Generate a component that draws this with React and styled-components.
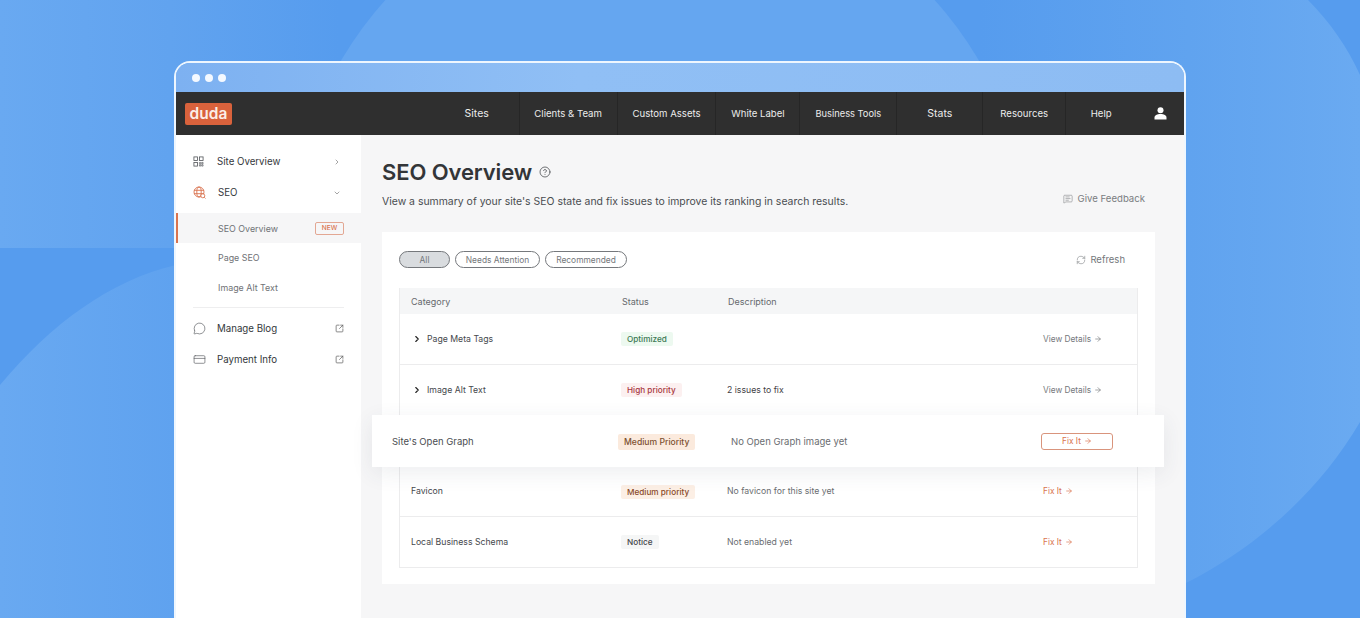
import React from 'react'
import styled, { createGlobalStyle } from 'styled-components'
import { ChevronRight, ChevronDown, MessageCircle, CreditCard, SquareArrowOutUpRight, CircleHelp, MessageSquareText, RefreshCw, ArrowRight } from 'lucide-react'

const Global = createGlobalStyle`
  html, body { margin: 0; padding: 0; height: 100%; overflow: hidden; }
  body { font-family: Inter, "Liberation Sans", sans-serif; background: #569cee; }
  #root { height: 100%; }
`

const Page = styled.div`
  position: relative;
  width: 1360px;
  height: 618px;
  overflow: hidden;
  padding-top: 61px;
  box-sizing: border-box;
`
const Backdrop = styled.svg`
  position: absolute;
  inset: 0;
`
const Window = styled.div`
  position: relative;
  width: 1012px;
  height: 600px;
  margin-left: 174px;
  border: 2px solid #eef6fe;
  border-bottom: none;
  border-radius: 16px 16px 0 0;
  box-sizing: border-box;
  overflow: hidden;
  display: flex;
  flex-direction: column;
`
const TitleBar = styled.div`
  height: 29px;
  flex: none;
  display: flex;
  align-items: center;
  gap: 5px;
  padding-left: 16px;
  background: linear-gradient(90deg, #7db1f1 0%, #90bff5 40%, #8dbcf3 100%);
`
const Dot = styled.span`
  width: 8px;
  height: 8px;
  border-radius: 50%;
  background: #f4f9ff;
`
const Navbar = styled.div`
  height: 43px;
  flex: none;
  display: flex;
  align-items: stretch;
  background: #2f2f2f;
`
const Logo = styled.div`
  width: 47px;
  height: 22px;
  margin: 11px 0 0 9px;
  background: #d9623c;
  border-radius: 2px;
  color: #fbeee8;
  font-size: 15.5px;
  font-weight: 600;
  line-height: 21px;
  text-align: center;
`
const NavSpacer = styled.div`
  width: 203px;
`
const NavItem = styled.div`
  width: ${p => p.$w}px;
  display: flex;
  align-items: center;
  justify-content: center;
  color: #ececec;
  font-size: ${p => p.$size || 9.6}px;
  padding-bottom: 1px;
  border-left: ${p => p.$line ? '1px solid #262626' : 'none'};
  box-sizing: border-box;
`
const Body = styled.div`
  flex: 1;
  display: flex;
  min-height: 0;
`
const Sidebar = styled.aside`
  width: 185px;
  flex: none;
  background: #fff;
  padding-top: 11px;
  box-sizing: border-box;
`
const SideItem = styled.div`
  height: 31px;
  display: flex;
  align-items: center;
  padding: 0 17px;
  color: #35383c;
  font-size: 9.7px;
`
const SideIcon = styled.span`
  width: 24px;
  display: flex;
  align-items: center;
  color: ${p => p.$accent ? '#d9734f' : '#55585c'};
`
const SideLabel = styled.span`
  flex: 1;
  margin-left: ${p => p.$nudge ? 1 : 0}px;
`
const SideChevron = styled.span`
  display: flex;
  margin-right: 3px;
  color: #777;
`
const SubList = styled.div`
  margin-top: 5px;
`
const SubItem = styled.div`
  height: ${p => p.$active ? 30 : 29.5}px;
  display: flex;
  align-items: center;
  justify-content: space-between;
  padding: 0 17px 0 ${p => p.$active ? 40 : 42}px;
  box-sizing: border-box;
  color: #6f7276;
  font-size: 8.9px;
  background: ${p => p.$active ? '#f6f6f7' : 'transparent'};
  border-left: ${p => p.$active ? '2px solid #d9734f' : 'none'};
`
const NewTag = styled.span`
  width: 29px;
  height: 13px;
  border: 1px solid #e3a793;
  border-radius: 2px;
  box-sizing: border-box;
  color: #d9734f;
  font-size: 6.5px;
  font-weight: 500;
  line-height: 11px;
  text-align: center;
`
const SideRule = styled.div`
  height: 1px;
  margin: 5px 17px;
  background: #eeeeef;
`
const Main = styled.main`
  flex: 1;
  background: #f6f6f7;
  padding: 22px 29px 0 21px;
  min-width: 0;
`
const TitleRow = styled.div`
  display: flex;
  align-items: center;
  gap: 7px;
  height: 29px;
`
const Title = styled.h1`
  margin: 0;
  color: #333538;
  font-size: 22px;
  font-weight: 600;
  letter-spacing: -0.1px;
`
const SubRow = styled.div`
  display: flex;
  justify-content: space-between;
  align-items: flex-start;
  margin-top: 7px;
  height: 39px;
`
const Lead = styled.p`
  margin: 2px 0 0;
  color: #4a4d51;
  font-size: 10.45px;
  line-height: 14px;
`
const Feedback = styled.div`
  display: flex;
  align-items: center;
  gap: 5px;
  color: #7a7d81;
  font-size: 9.6px;
  margin-right: 10px;
`
const Card = styled.section`
  width: 773px;
  height: 352px;
  background: #fff;
  padding: 19px 17px 0;
  box-sizing: border-box;
`
const Toolbar = styled.div`
  display: flex;
  align-items: center;
  justify-content: space-between;
  height: 17px;
  margin-bottom: 20px;
`
const Pills = styled.div`
  display: flex;
  gap: 5px;
`
const Pill = styled.span`
  height: 17px;
  width: ${p => p.$w}px;
  border: 1px solid #75787c;
  border-radius: 9px;
  box-sizing: border-box;
  background: ${p => p.$on ? '#d9dcdf' : '#fff'};
  color: #74777b;
  font-size: 8.4px;
  line-height: 16px;
  text-align: center;
`
const Refresh = styled.div`
  display: flex;
  align-items: center;
  gap: 4px;
  color: #74777b;
  font-size: 9.5px;
  margin-right: 13px;
`
const Table = styled.div`
  width: 739px;
  height: 280px;
  border: 1px solid #ececed;
  border-top: none;
  box-sizing: border-box;
`
const HeadRow = styled.div`
  height: 26px;
  display: grid;
  grid-template-columns: 211px 106px 1fr;
  align-items: center;
  padding-left: 11px;
  background: #f5f6f7;
  color: #66696d;
  font-size: 9px;
`
const Row = styled.div`
  height: ${p => p.$h || 50.5}px;
  display: grid;
  grid-template-columns: 221px 106px 1fr 94px;
  align-items: center;
  border-bottom: ${p => p.$plain ? 'none' : '1px solid #ececed'};
  box-sizing: border-box;
  color: #45484c;
  font-size: 8.7px;
`
const FloatRow = styled.div`
  position: relative;
  width: 792px;
  height: 52px;
  margin-left: -28px;
  display: grid;
  grid-template-columns: 226px 113px 310px 1fr;
  align-items: center;
  padding-left: 20px;
  box-sizing: border-box;
  background: #fff;
  box-shadow: 0 6px 22px rgba(60, 70, 90, 0.09);
  color: #4a4d51;
  font-size: 9.5px;
`
const Category = styled.div`
  display: flex;
  align-items: center;
  padding-left: ${p => p.$arrow ? 12 : 11}px;
  gap: 5px;
`
const Badge = styled.span`
  justify-self: start;
  padding: 2px 6px;
  margin-top: 1px;
  border-radius: 2px;
  font-size: ${p => p.$big ? 8.6 : 8.2}px;
  font-weight: 500;
  line-height: ${p => p.$big ? 12 : 10}px;
  color: ${p => p.$fg};
  background: ${p => p.$bg};
`
const Desc = styled.span`
  color: ${p => p.$dark ? '#3f4246' : '#6a6d71'};
`
const Action = styled.span`
  display: flex;
  align-items: center;
  gap: 3px;
  color: ${p => p.$fix ? '#d9734f' : '#75787c'};
  font-size: 8.3px;
`
const FixButton = styled.span`
  width: 72px;
  height: 17px;
  border: 1px solid #d9947c;
  border-radius: 3px;
  box-sizing: border-box;
  display: flex;
  align-items: center;
  justify-content: center;
  gap: 3px;
  color: #d9734f;
  font-size: 8.3px;
`

const navItems = [
  { label: 'Sites', w: 84, size: 10.5 },
  { label: 'Clients & Team', w: 98, line: true },
  { label: 'Custom Assets', w: 99, line: true },
  { label: 'White Label', w: 84, line: true },
  { label: 'Business Tools', w: 97, line: true, size: 9.3 },
  { label: 'Stats', w: 86, line: true, size: 10.5 },
  { label: 'Resources', w: 83, line: true },
  { label: 'Help', w: 71, line: true }
]

const OverviewIcon = () => (
  <svg width="11" height="11" viewBox="0 0 12 12" fill="none" stroke="currentColor" strokeWidth="0.9">
    <rect x="1" y="1" width="4" height="4" />
    <rect x="7" y="1" width="4" height="4" />
    <rect x="1" y="7" width="4" height="4" />
    <path d="M7 7h1.5v1.5H7zM9.5 7H11v1.5H9.5zM7 9.5h1.5V11H7zM9.5 9.5H11V11H9.5z" strokeWidth="0.7" />
  </svg>
)

const SeoIcon = () => (
  <svg width="13" height="13" viewBox="0 0 13 13" fill="none" stroke="currentColor" strokeWidth="0.9">
    <circle cx="6" cy="6" r="5" />
    <ellipse cx="6" cy="6" rx="2.2" ry="5" />
    <path d="M1 4.3h10M1 7.7h10" />
    <circle cx="9.8" cy="9.8" r="2" fill="#fff" />
    <path d="M11.3 11.3l1.2 1.2" />
  </svg>
)

const UserIcon = () => (
  <svg width="13" height="13" viewBox="0 0 13 13" fill="#fff">
    <circle cx="6.5" cy="3.2" r="3" />
    <path d="M0.5 12.5v-1.8c0-2.4 2.6-3.7 6-3.7s6 1.3 6 3.7v1.8z" />
  </svg>
)

export default function App() {
  return (
    <Page>
      <Global />
      <Backdrop width="1360" height="618" viewBox="0 0 1360 618">
        <defs>
          <linearGradient id="leftFade" x1="0" x2="1" y1="0" y2="0">
            <stop offset="0" stopColor="#69a9f1" />
            <stop offset="0.5" stopColor="#61a3ef" />
            <stop offset="1" stopColor="#569cee" />
          </linearGradient>
          <linearGradient id="sideFade" x1="0" x2="1" y1="0" y2="0">
            <stop offset="0" stopColor="#69a9f1" />
            <stop offset="1" stopColor="#5fa2ef" />
          </linearGradient>
          <linearGradient id="rightFade" x1="0" x2="1" y1="0" y2="0">
            <stop offset="0" stopColor="#569cee" />
            <stop offset="0.55" stopColor="#60a3ef" />
            <stop offset="1" stopColor="#6aaaf1" />
          </linearGradient>
        </defs>
        <rect x="0" y="0" width="340" height="248" fill="url(#leftFade)" />
        <circle cx="660" cy="248" r="370" fill="#65a6f0" />
        <path d="M0 385 C50 325 110 280 176 265 L176 618 L0 618 Z" fill="url(#sideFade)" />
        <path d="M980 0 L1308 0 C1330 22 1348 48 1360 75 L1360 422 C1320 490 1260 545 1186 583 L1186 618 L980 618 Z" fill="url(#rightFade)" />
      </Backdrop>
      <Window>
        <TitleBar><Dot /><Dot /><Dot /></TitleBar>
        <Navbar>
          <Logo>duda</Logo>
          <NavSpacer />
          {navItems.map(n => (
            <NavItem key={n.label} $w={n.w} $line={n.line} $size={n.size}>{n.label}</NavItem>
          ))}
          <NavItem $w={48}><UserIcon /></NavItem>
        </Navbar>
        <Body>
          <Sidebar>
            <SideItem>
              <SideIcon><OverviewIcon /></SideIcon>
              <SideLabel>Site Overview</SideLabel>
              <SideChevron><ChevronRight size={8} /></SideChevron>
            </SideItem>
            <SideItem>
              <SideIcon $accent><SeoIcon /></SideIcon>
              <SideLabel $nudge>SEO</SideLabel>
              <SideChevron><ChevronDown size={8} /></SideChevron>
            </SideItem>
            <SubList>
              <SubItem $active>SEO Overview<NewTag>NEW</NewTag></SubItem>
              <SubItem>Page SEO</SubItem>
              <SubItem>Image Alt Text</SubItem>
            </SubList>
            <SideRule />
            <SideItem>
              <SideIcon><MessageCircle size={13} strokeWidth={1.2} /></SideIcon>
              <SideLabel>Manage Blog</SideLabel>
              <SquareArrowOutUpRight size={9} color="#666" />
            </SideItem>
            <SideItem>
              <SideIcon><CreditCard size={13} strokeWidth={1.2} /></SideIcon>
              <SideLabel>Payment Info</SideLabel>
              <SquareArrowOutUpRight size={9} color="#666" />
            </SideItem>
          </Sidebar>
          <Main>
            <TitleRow>
              <Title>SEO Overview</Title>
              <CircleHelp size={12} color="#44474b" strokeWidth={1.5} />
            </TitleRow>
            <SubRow>
              <Lead>View a summary of your site's SEO state and fix issues to improve its ranking in search results.</Lead>
              <Feedback><MessageSquareText size={10} strokeWidth={1.3} />Give Feedback</Feedback>
            </SubRow>
            <Card>
              <Toolbar>
                <Pills>
                  <Pill $w={51} $on>All</Pill>
                  <Pill $w={85}>Needs Attention</Pill>
                  <Pill $w={82}>Recommended</Pill>
                </Pills>
                <Refresh><RefreshCw size={10} strokeWidth={1.3} />Refresh</Refresh>
              </Toolbar>
              <Table>
                <HeadRow><span>Category</span><span>Status</span><span>Description</span></HeadRow>
                <Row>
                  <Category $arrow><ChevronRight size={10} color="#222" strokeWidth={2.6} />Page Meta Tags</Category>
                  <Badge $fg="#3d7a55" $bg="#edf9f0">Optimized</Badge>
                  <span />
                  <Action>View Details <ArrowRight size={8} /></Action>
                </Row>
                <Row $plain>
                  <Category $arrow><ChevronRight size={10} color="#222" strokeWidth={2.6} />Image Alt Text</Category>
                  <Badge $fg="#a8383f" $bg="#fcf0f0">High priority</Badge>
                  <Desc $dark>2 issues to fix</Desc>
                  <Action>View Details <ArrowRight size={8} /></Action>
                </Row>
                <FloatRow>
                  <span>Site's Open Graph</span>
                  <Badge $big $fg="#7d5130" $bg="#fbeadd">Medium Priority</Badge>
                  <Desc>No Open Graph image yet</Desc>
                  <FixButton>Fix It <ArrowRight size={8} /></FixButton>
                </FloatRow>
                <Row $h={49.5}>
                  <Category>Favicon</Category>
                  <Badge $fg="#8a4b2a" $bg="#fcefe5">Medium priority</Badge>
                  <Desc>No favicon for this site yet</Desc>
                  <Action $fix>Fix It <ArrowRight size={8} /></Action>
                </Row>
                <Row $plain>
                  <Category>Local Business Schema</Category>
                  <Badge $fg="#45484c" $bg="#f5f6f6">Notice</Badge>
                  <Desc>Not enabled yet</Desc>
                  <Action $fix>Fix It <ArrowRight size={8} /></Action>
                </Row>
              </Table>
            </Card>
          </Main>
        </Body>
      </Window>
    </Page>
  )
}
